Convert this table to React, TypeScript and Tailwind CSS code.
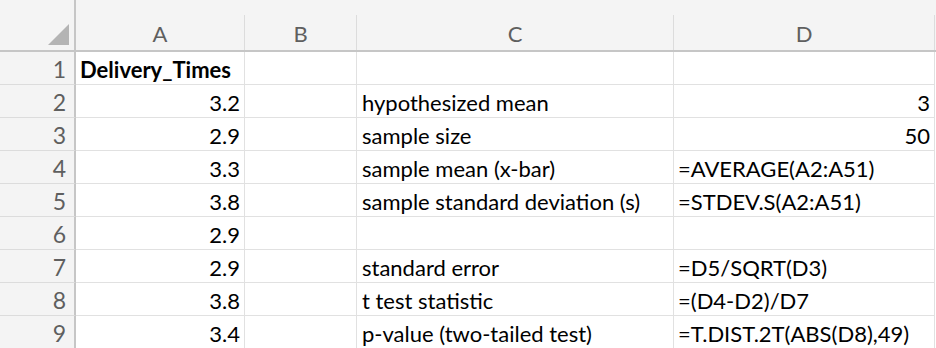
import React from 'react';

const cols = [
  { key: 'A', width: 'w-[169px]' },
  { key: 'B', width: 'w-[112px]' },
  { key: 'C', width: 'w-[317px]' },
  { key: 'D', width: 'w-[261px]' },
];

type Row = { a?: string; c?: string; d?: string; dRight?: boolean; bold?: boolean };

const rows: Row[] = [
  { a: 'Delivery_Times', bold: true },
  { a: '3.2', c: 'hypothesized mean', d: '3', dRight: true },
  { a: '2.9', c: 'sample size', d: '50', dRight: true },
  { a: '3.3', c: 'sample mean (x-bar)', d: '=AVERAGE(A2:A51)' },
  { a: '3.8', c: 'sample standard deviation (s)', d: '=STDEV.S(A2:A51)' },
  { a: '2.9' },
  { a: '2.9', c: 'standard error', d: '=D5/SQRT(D3)' },
  { a: '3.8', c: 't test statistic', d: '=(D4-D2)/D7' },
  { a: '3.4', c: 'p-value (two-tailed test)', d: '=T.DIST.2T(ABS(D8),49)' },
];

const App = () => {
  return (
    <div
      className="w-[936px] h-[348px] overflow-hidden bg-white text-black"
      style={{ fontFamily: 'Lato, "Open Sans", sans-serif' }}
    >
      {/* column header */}
      <div className="flex h-[52px] bg-[#f4f4f4] border-b-2 border-[#c6c6c6]">
        <div className="relative w-[76px] shrink-0 border-r-2 border-[#c6c6c6]">
          <svg className="absolute left-[48px] top-[24px]" width="22" height="22" viewBox="0 0 22 22">
            <polygon points="21,0 21,21 0,21" fill="#b4b4b4" />
          </svg>
        </div>
        {cols.map((c) => (
          <div key={c.key} className={`${c.width} shrink-0 flex flex-col`}>
            <div className="h-[20px]" />
            <div className="flex-1 flex items-center justify-center border-r border-[#dcdcdc] text-[22px] text-[#5f5f5f] pt-[2px]">
              {c.key}
            </div>
          </div>
        ))}
      </div>

      {rows.map((r, i) => (
        <div key={i} className="flex h-[33px] text-[22px] leading-none">
          <div className="w-[76px] shrink-0 bg-[#f4f4f4] border-r-2 border-[#c6c6c6] border-b border-b-[#dcdcdc] flex items-center justify-end pr-[8px] pt-[3px] text-[23px] text-[#5f5f5f]">
            {i + 1}
          </div>
          <div
            className={`w-[169px] shrink-0 border-r border-b border-[#e1e1e1] flex items-center px-[4px] pt-[3px] whitespace-nowrap ${
              r.bold ? 'font-bold justify-start overflow-visible' : 'justify-end'
            }`}
          >
            {r.a}
          </div>
          <div className="w-[112px] shrink-0 border-r border-b border-[#e1e1e1]" />
          <div className="w-[317px] shrink-0 border-r border-b border-[#e1e1e1] flex items-center px-[5px] pt-[3px] whitespace-nowrap">
            {r.c}
          </div>
          <div
            className={`w-[261px] shrink-0 border-r border-b border-[#e1e1e1] flex items-center px-[4px] pt-[3px] whitespace-nowrap ${
              r.dRight ? 'justify-end' : 'justify-start'
            }`}
          >
            {r.d}
          </div>
        </div>
      ))}
    </div>
  );
};

export default App;
